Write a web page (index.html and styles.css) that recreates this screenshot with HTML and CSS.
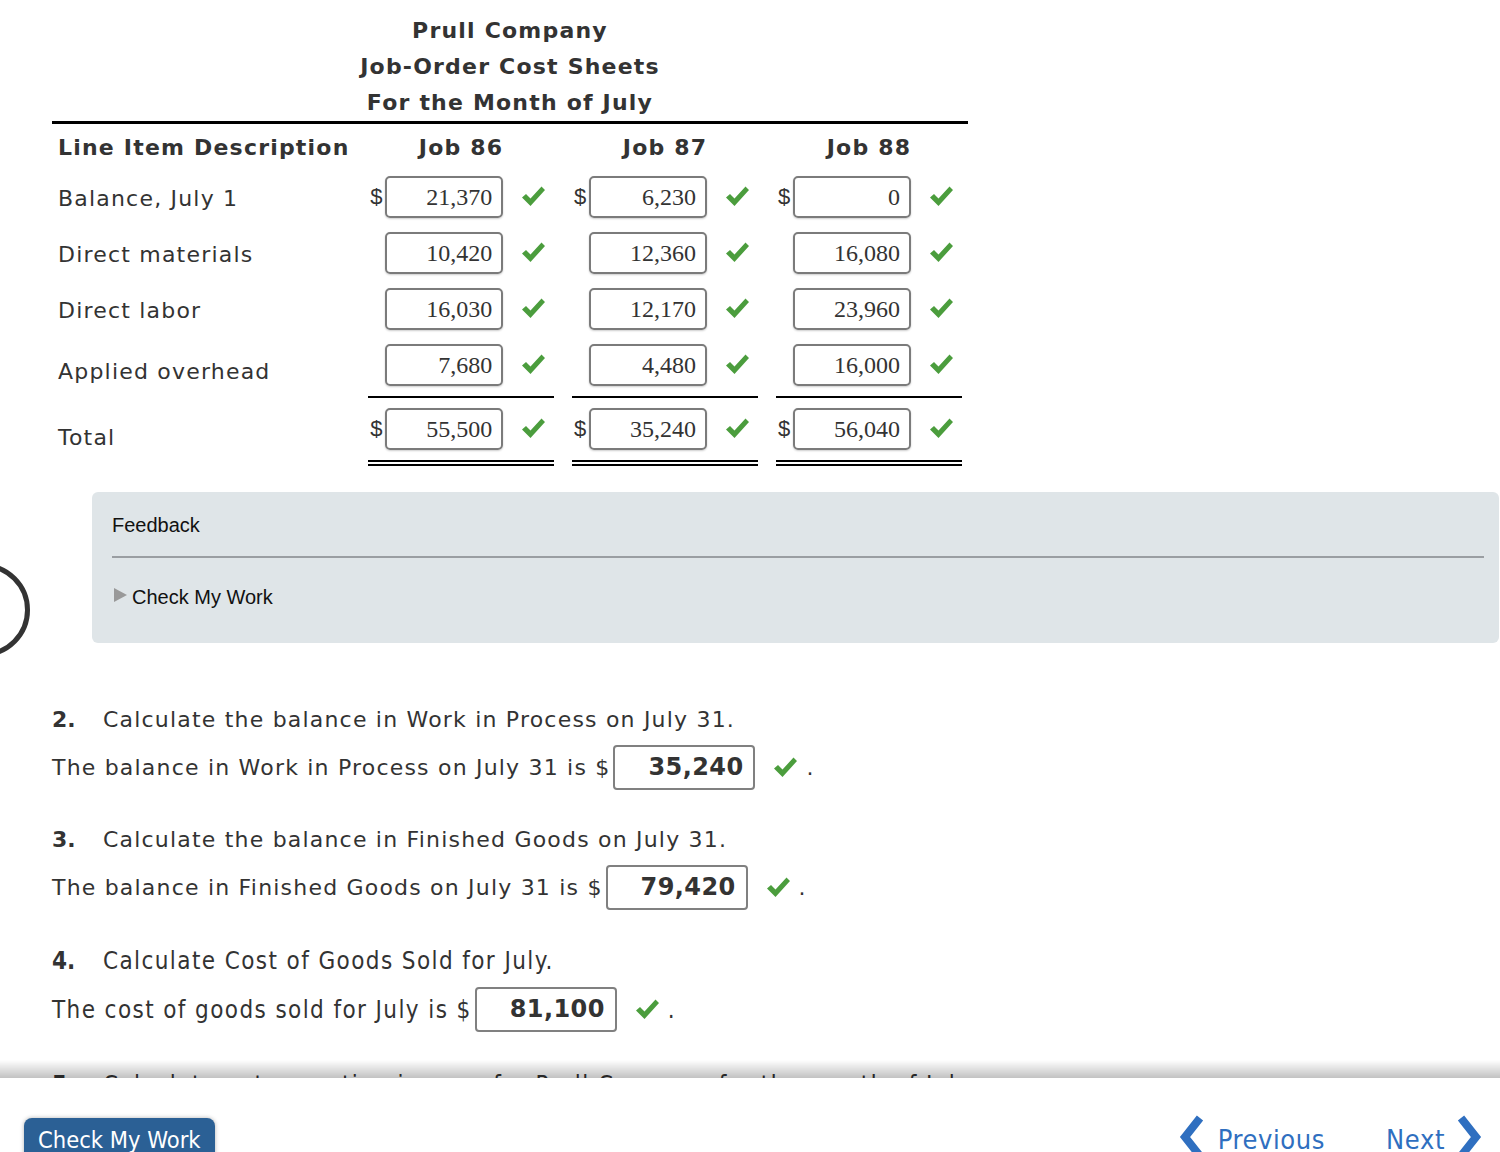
FILE: index.html
```html
<!DOCTYPE html>
<html lang="en">

<head>
  <meta charset="UTF-8">
  <meta name="viewport" content="width=device-width, initial-scale=1.0">
  <title>Job-Order Cost Sheets</title>
  <link rel="stylesheet" href="styles.css">
</head>

<body>
  <div class="sheet">
    <div class="sheet-title">
      <div>Prull Company</div>
      <div>Job-Order Cost Sheets</div>
      <div>For the Month of July</div>
    </div>

    <table class="cost">
      <thead>
        <tr>
          <th class="desc">Line Item Description</th>
          <th>Job 86</th>
          <th>Job 87</th>
          <th>Job 88</th>
        </tr>
      </thead>
      <tbody>
        <tr>
          <td class="desc">Balance, July 1</td>
          <td class="job"><div class="amt"><span class="cur">$</span><span class="box">21,370</span><svg class="ok" viewBox="0 0 24 24"><path d="M1 12.5 L5 9 L9.5 13.5 L20.5 1.5 L24 5 L9.5 21 Z"/></svg></div></td>
          <td class="job"><div class="amt"><span class="cur">$</span><span class="box">6,230</span><svg class="ok" viewBox="0 0 24 24"><path d="M1 12.5 L5 9 L9.5 13.5 L20.5 1.5 L24 5 L9.5 21 Z"/></svg></div></td>
          <td class="job"><div class="amt"><span class="cur">$</span><span class="box">0</span><svg class="ok" viewBox="0 0 24 24"><path d="M1 12.5 L5 9 L9.5 13.5 L20.5 1.5 L24 5 L9.5 21 Z"/></svg></div></td>
        </tr>
        <tr>
          <td class="desc">Direct materials</td>
          <td class="job"><div class="amt"><span class="cur"></span><span class="box">10,420</span><svg class="ok" viewBox="0 0 24 24"><path d="M1 12.5 L5 9 L9.5 13.5 L20.5 1.5 L24 5 L9.5 21 Z"/></svg></div></td>
          <td class="job"><div class="amt"><span class="cur"></span><span class="box">12,360</span><svg class="ok" viewBox="0 0 24 24"><path d="M1 12.5 L5 9 L9.5 13.5 L20.5 1.5 L24 5 L9.5 21 Z"/></svg></div></td>
          <td class="job"><div class="amt"><span class="cur"></span><span class="box">16,080</span><svg class="ok" viewBox="0 0 24 24"><path d="M1 12.5 L5 9 L9.5 13.5 L20.5 1.5 L24 5 L9.5 21 Z"/></svg></div></td>
        </tr>
        <tr>
          <td class="desc">Direct labor</td>
          <td class="job"><div class="amt"><span class="cur"></span><span class="box">16,030</span><svg class="ok" viewBox="0 0 24 24"><path d="M1 12.5 L5 9 L9.5 13.5 L20.5 1.5 L24 5 L9.5 21 Z"/></svg></div></td>
          <td class="job"><div class="amt"><span class="cur"></span><span class="box">12,170</span><svg class="ok" viewBox="0 0 24 24"><path d="M1 12.5 L5 9 L9.5 13.5 L20.5 1.5 L24 5 L9.5 21 Z"/></svg></div></td>
          <td class="job"><div class="amt"><span class="cur"></span><span class="box">23,960</span><svg class="ok" viewBox="0 0 24 24"><path d="M1 12.5 L5 9 L9.5 13.5 L20.5 1.5 L24 5 L9.5 21 Z"/></svg></div></td>
        </tr>
        <tr class="sub">
          <td class="desc">Applied overhead</td>
          <td class="job"><div class="amt"><span class="cur"></span><span class="box">7,680</span><svg class="ok" viewBox="0 0 24 24"><path d="M1 12.5 L5 9 L9.5 13.5 L20.5 1.5 L24 5 L9.5 21 Z"/></svg></div></td>
          <td class="job"><div class="amt"><span class="cur"></span><span class="box">4,480</span><svg class="ok" viewBox="0 0 24 24"><path d="M1 12.5 L5 9 L9.5 13.5 L20.5 1.5 L24 5 L9.5 21 Z"/></svg></div></td>
          <td class="job"><div class="amt"><span class="cur"></span><span class="box">16,000</span><svg class="ok" viewBox="0 0 24 24"><path d="M1 12.5 L5 9 L9.5 13.5 L20.5 1.5 L24 5 L9.5 21 Z"/></svg></div></td>
        </tr>
        <tr class="total">
          <td class="desc">Total</td>
          <td class="job"><div class="amt"><span class="cur">$</span><span class="box">55,500</span><svg class="ok" viewBox="0 0 24 24"><path d="M1 12.5 L5 9 L9.5 13.5 L20.5 1.5 L24 5 L9.5 21 Z"/></svg></div></td>
          <td class="job"><div class="amt"><span class="cur">$</span><span class="box">35,240</span><svg class="ok" viewBox="0 0 24 24"><path d="M1 12.5 L5 9 L9.5 13.5 L20.5 1.5 L24 5 L9.5 21 Z"/></svg></div></td>
          <td class="job"><div class="amt"><span class="cur">$</span><span class="box">56,040</span><svg class="ok" viewBox="0 0 24 24"><path d="M1 12.5 L5 9 L9.5 13.5 L20.5 1.5 L24 5 L9.5 21 Z"/></svg></div></td>
        </tr>
      </tbody>
    </table>
  </div>

  <div class="fb-row">
    <div class="ring"></div>
    <div class="feedback">
      <div class="fb-head">Feedback</div>
      <div class="fb-body"><span class="tri"></span>Check My Work</div>
    </div>
  </div>

  <div class="q">
    <div class="q-text"><span class="num">2.</span>Calculate the balance in Work in Process on July 31.</div>
    <div class="q-line">The balance in Work in Process on July 31 is $<span class="ans">35,240</span><svg class="ok" viewBox="0 0 24 24"><path d="M1 12.5 L5 9 L9.5 13.5 L20.5 1.5 L24 5 L9.5 21 Z"/></svg>.</div>
  </div>

  <div class="q">
    <div class="q-text"><span class="num">3.</span>Calculate the balance in Finished Goods on July 31.</div>
    <div class="q-line">The balance in Finished Goods on July 31 is $<span class="ans">79,420</span><svg class="ok" viewBox="0 0 24 24"><path d="M1 12.5 L5 9 L9.5 13.5 L20.5 1.5 L24 5 L9.5 21 Z"/></svg>.</div>
  </div>

  <div class="q narrow">
    <div class="q-text"><span class="num">4.</span>Calculate Cost of Goods Sold for July.</div>
    <div class="q-line">The cost of goods sold for July is $<span class="ans">81,100</span><svg class="ok" viewBox="0 0 24 24"><path d="M1 12.5 L5 9 L9.5 13.5 L20.5 1.5 L24 5 L9.5 21 Z"/></svg>.</div>
  </div>

  <div class="q narrow last">
    <div class="q-text"><span class="num">5.</span>Calculate net operating income for Prull Company for the month of July.</div>
  </div>

  <div class="foot">
    <div class="btn-check">Check My Work</div>
    <div class="nav">
      <a class="nav-link">
        <svg class="chev" viewBox="0 0 28 44"><path d="M22 3 L7 22 L22 41" /></svg>
        Previous
      </a>
      <a class="nav-link next">
        Next
        <svg class="chev" viewBox="0 0 28 44"><path d="M6 3 L21 22 L6 41" /></svg>
      </a>
    </div>
  </div>
</body>

</html>
```

FILE: styles.css
```css
body {
  margin: 0;
  padding: 0;
  background: #fff;
  color: #333;
  font-family: "DejaVu Sans", Verdana, sans-serif;
  letter-spacing: 1.2px;
}

.sheet {
  margin-left: 52px;
  width: 919px;
}

.sheet-title {
  width: 916px;
  padding-top: 13px;
  text-align: center;
  font-weight: bold;
  font-size: 22px;
  line-height: 36px;
  border-bottom: 3px solid #000;
}

/* cost sheet table */
.cost {
  border-collapse: collapse;
  border-spacing: 0;
}

.cost th {
  padding: 3px 0 0;
  line-height: 42px;
  font-size: 22px;
  text-align: center;
  width: 204px;
}

.cost .desc {
  width: 301px;
  padding-left: 6px;
  text-align: left;
  font-size: 22px;
}

.cost td.desc {
  padding-top: 4px;
}

.cost .sub td.desc {
  padding-top: 8px;
}

.cost .total td.desc {
  padding-top: 12px;
}

.cost td.job {
  padding: 0 9px;
}

.amt {
  display: flex;
  align-items: center;
  padding: 7px 0;
  letter-spacing: 0;
}

.sub .amt {
  padding-bottom: 10px;
  border-bottom: 2px solid #000;
}

.total .amt {
  padding: 10px 0;
  border-bottom: 6px double #000;
}

.cur {
  width: 15px;
  padding-left: 2px;
  font-family: "Liberation Sans", Arial, sans-serif;
  font-size: 22px;
}

.box {
  width: 118px;
  height: 42px;
  box-sizing: border-box;
  border: 2px solid #7b7b7b;
  border-radius: 5px;
  box-shadow: 0 1px 2px rgba(0, 0, 0, 0.2);
  padding-right: 9px;
  text-align: right;
  font-family: "Liberation Serif", "Times New Roman", serif;
  font-size: 24px;
  line-height: 38px;
}

.ok {
  width: 24px;
  height: 24px;
  fill: #4b9d3d;
  flex-shrink: 0;
}

.amt .ok {
  margin-left: 18px;
}

/* feedback panel */
.fb-row {
  position: relative;
  margin-top: 26px;
  padding-left: 92px;
}

.ring {
  position: absolute;
  left: -64px;
  top: 71px;
  width: 84px;
  height: 84px;
  border: 5px solid #333;
  border-radius: 50%;
}

.feedback {
  margin-right: 1px;
  background-color: #dfe5e8;
  border-radius: 6px;
  font-family: "Liberation Sans", Arial, sans-serif;
  font-size: 20px;
  line-height: 22px;
  letter-spacing: 0;
  color: #111;
}

.fb-head {
  margin: 0 15px 0 20px;
  padding: 22px 0 20px;
  border-bottom: 2px solid #9a9ea2;
}

.fb-body {
  display: flex;
  align-items: center;
  padding: 28px 20px 35px 22px;
}

.tri {
  width: 0;
  height: 0;
  border-left: 13px solid #999;
  border-top: 7px solid transparent;
  border-bottom: 7px solid transparent;
  margin: -4px 5px 0 0;
}

/* questions */
.q {
  margin: 35px 0 0 52px;
  font-size: 22px;
}

.fb-row + .q {
  margin-top: 62px;
}

.q.narrow {
  margin-top: 36px;
  font-family: "DejaVu Sans Condensed", Tahoma, sans-serif;
  font-size: 24px;
  letter-spacing: 1.4px;
}

.q.last {
  margin-top: 38px;
}

.q-text {
  line-height: 30px;
}

.num {
  display: inline-block;
  width: 51px;
  font-weight: bold;
  letter-spacing: 0;
}

.q-line {
  display: flex;
  align-items: center;
  height: 45px;
  margin-top: 10px;
}

.narrow .q-line {
  margin-top: 11px;
}

.ans {
  width: 142px;
  height: 45px;
  box-sizing: border-box;
  margin-left: 3px;
  border: 2px solid #808080;
  border-radius: 4px;
  padding-right: 10px;
  text-align: right;
  font-family: "DejaVu Sans", Verdana, sans-serif;
  font-weight: bold;
  font-size: 24px;
  letter-spacing: 0.4px;
  line-height: 41px;
}

.q-line .ok {
  margin: 0 9px 0 18px;
}

/* bottom bar */
.foot {
  position: fixed;
  left: 0;
  right: 0;
  bottom: 0;
  height: 74px;
  background: #fff;
  display: flex;
  justify-content: space-between;
  align-items: flex-start;
  padding: 40px 17px 0 24px;
  box-sizing: border-box;
  overflow: hidden;
  letter-spacing: 0;
}

.foot::before {
  content: "";
  position: fixed;
  left: 0;
  right: 0;
  bottom: 74px;
  height: 18px;
  background: linear-gradient(rgba(0, 0, 0, 0), rgba(0, 0, 0, 0.24));
}

.btn-check {
  width: 191px;
  height: 50px;
  box-sizing: border-box;
  padding: 8px 0 0 14px;
  background-color: #2b6095;
  border-radius: 8px 8px 0 0;
  box-shadow: 0 0 4px rgba(0, 0, 0, 0.3);
  color: #fff;
  font-family: "DejaVu Sans Condensed", Tahoma, sans-serif;
  font-size: 23.5px;
}

.nav {
  display: flex;
  gap: 61px;
  margin-top: -3px;
}

.nav-link {
  display: flex;
  align-items: flex-start;
  gap: 12px;
  color: #2f6fc0;
  font-family: "DejaVu Sans Condensed", Tahoma, sans-serif;
  font-size: 27px;
  letter-spacing: 0.6px;
  line-height: 50px;
}

.nav-link.next {
  gap: 10px;
}

.chev {
  width: 28px;
  height: 44px;
  fill: none;
  stroke: #2f6fc0;
  stroke-width: 8;
}
```
